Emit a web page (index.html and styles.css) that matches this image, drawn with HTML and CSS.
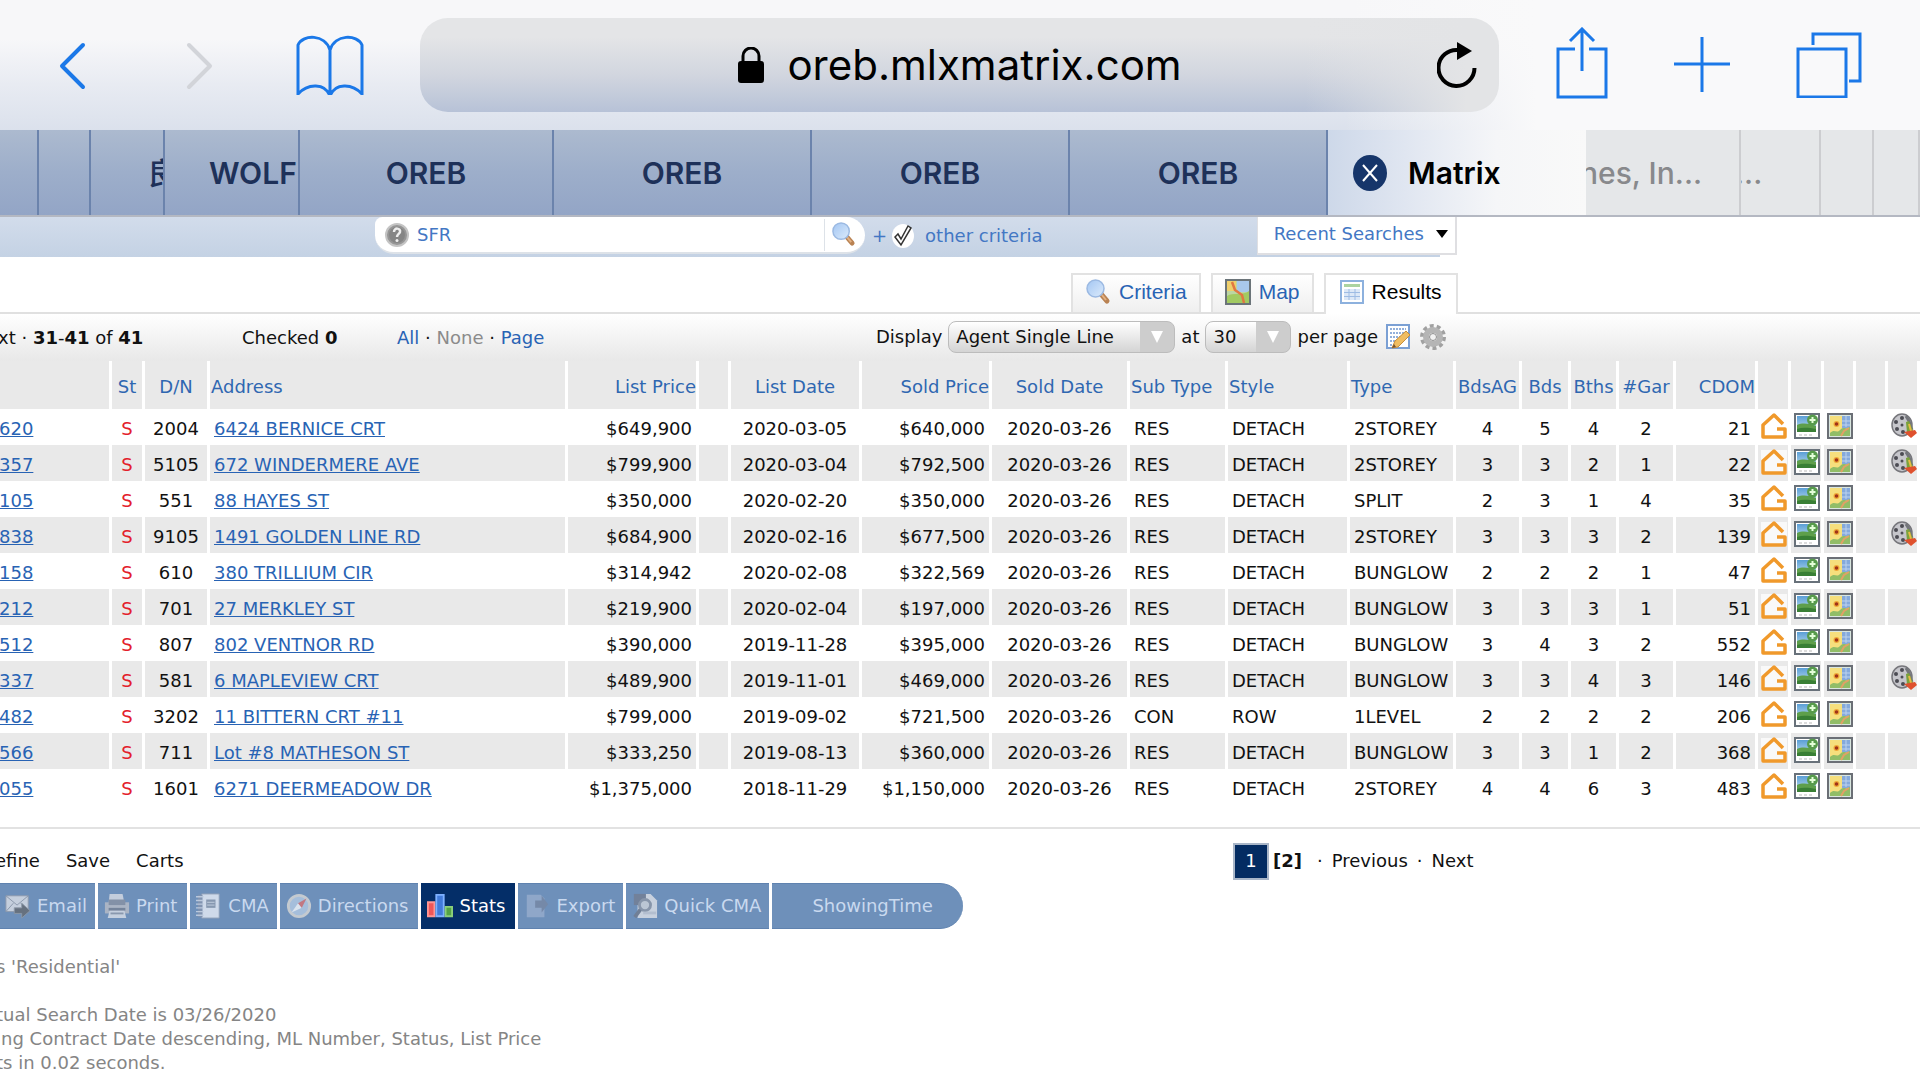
FILE: index.html
```html
<!DOCTYPE html>
<html lang="en">
<head>
<meta charset="utf-8">
<title>Matrix</title>
<link rel="stylesheet" href="styles.css">
</head>
<body>
<svg class="sprite" aria-hidden="true">
  <linearGradient id="sky" x1="0" y1="0" x2="0" y2="1"><stop offset="0" stop-color="#5b9fd6"/><stop offset="1" stop-color="#c4e2f2"/></linearGradient>
  <linearGradient id="lens" x1="0" y1="0" x2="1" y2="1"><stop offset="0" stop-color="#a3c6f3"/><stop offset="1" stop-color="#dcebfb"/></linearGradient>
  <symbol id="house" viewBox="0 0 26 26"><path d="M0 1h26v24H0z" fill="#fff" opacity=".7"/><path d="M22 11 13 2 2 12v12h22v-8h-8" fill="none" stroke="#f0992b" stroke-width="3.500" stroke-linejoin="round"/></symbol>
  <symbol id="photo" viewBox="0 0 26 26"><path d="M1 1h24v24H1z" fill="#fff" stroke="#68717a" stroke-width="2"/><path d="M3 3h19v16H3z" fill="url(#sky)"/><path d="M3 12c5-2 10-2 19 1v6H3z" fill="#5e9f4b"/><path d="M3 16c6-2 12-1 19 0v3H3z" fill="#397f35"/><circle cx="18.500" cy="7" r="5.500" fill="#579b4c"/><path d="M18.500 4v6M15.500 7h6" stroke="#e4ffd9" stroke-width="2"/><path d="M5 22h15" stroke="#b9b9b9" stroke-dasharray="3 2"/></symbol>
  <symbol id="pin-map" viewBox="0 0 26 26"><path d="M1 1h24v24H1z" fill="#d9e6df" stroke="#6b6f76" stroke-width="2"/><path d="M3 3h12v20H3z" fill="#f6df7d"/><path d="M15 3h8v12h-8z" fill="#84a9dc"/><path d="M19 3v11M15 8h8M15 12h8" stroke="#bcd2ee"/><path d="M3 20c5-5 6 1 10-3s5 0 10-3v9H3z" fill="#91bd67"/><path d="m14 23 3-5 5-3" fill="none" stroke="#e2a066" stroke-width="2"/><circle cx="9.500" cy="11" r="3" fill="#efa93a"/><circle cx="9.500" cy="11" r="1.800" fill="#a13218"/></symbol>
  <symbol id="film" viewBox="0 0 26 26"><ellipse cx="11" cy="12" rx="10" ry="11" fill="#c6c6cb" stroke="#77777c" stroke-width="1.500"/><g fill="#4c4c53"><circle cx="11" cy="5" r="2"/><circle cx="5" cy="9" r="2"/><circle cx="6" cy="16" r="2"/><circle cx="12" cy="19" r="2"/><circle cx="11" cy="12" r="1.500"/></g><path d="m15 3 3 5 3 9" fill="none" stroke="#74767b" stroke-width="3"/><path d="m15 9 3-1 4 10-6 2z" fill="#7ba23b"/><path d="m18 11 2 7" stroke="#e8bc45" stroke-width="2"/><path d="m13 19 11-2 2 3-6 5z" fill="#df512e"/></symbol>
  <symbol id="magnifier" viewBox="0 0 26 26"><path d="m16 15 6 7" stroke="#b98252" stroke-width="5" stroke-linecap="round"/><path d="m17 16 4 5" stroke="#e2b183" stroke-width="2"/><ellipse cx="10.500" cy="9.500" rx="8.500" ry="8.500" fill="url(#lens)" stroke="#9bb9e2" stroke-width="1.500"/></symbol>
</svg>

<header class="browser">
  <nav class="controls" aria-label="Browser">
    <button class="glyph" aria-label="Back"><svg width="28" height="50" viewBox="0 0 28 50"><path d="M25 5 4 26l21 21" class="line thick"/></svg></button>
    <button class="glyph" aria-label="Forward"><svg width="28" height="50" viewBox="0 0 28 50"><path d="m3 5 21 21L3 47" class="line thick off"/></svg></button>
    <button class="glyph" aria-label="Bookmarks"><svg width="68" height="60" viewBox="0 0 68 60"><path d="M34 61V15C29-1 7-1 2 10v49c10-11 27-11 32 2 5-13 22-13 32-2V10C61-1 39-1 34 15" class="line"/></svg></button>
    <div class="address">
      <svg width="28" height="36" viewBox="0 0 28 36"><rect x="1" y="14" width="26" height="22" rx="3"/><path d="M6 17V9a8 8 0 0 1 16 0v8" fill="none" stroke="#000" stroke-width="3"/></svg>
      <span>oreb.mlxmatrix.com</span>
      <button class="reload" aria-label="Reload"><svg width="40" height="46" viewBox="0 0 40 46"><path d="M37.500 26A18 18 0 1 1 21 8" fill="none" stroke="#000" stroke-width="4"/><path d="m20 0 15 9-15 9z"/></svg></button>
    </div>
    <button class="glyph" aria-label="Share"><svg width="52" height="76" viewBox="0 2 52 76"><path d="M19 24H2v48h48V24H33M26 46V4M14 16 26 4l12 12" class="line"/></svg></button>
    <button class="glyph" aria-label="New tab"><svg width="56" height="56" viewBox="0 0 56 56"><path d="M28 0v55M0 27h56" class="line"/></svg></button>
    <button class="glyph" aria-label="All tabs"><svg width="66" height="66" viewBox="0 0 66 66"><path d="M2 17h48v48H2zM17 13V2h47v47H53" class="line"/></svg></button>
  </nav>
  <nav class="tabs" aria-label="Open tabs">
    <div></div><div></div><div class="cut cjk">良</div><div class="cut">WOLF</div>
    <div>OREB</div><div>OREB</div><div>OREB</div><div>OREB</div>
    <div class="active"><button class="close" aria-label="Close tab"><svg width="34" height="36" viewBox="0 0 34 36"><ellipse cx="17" cy="18" rx="17" ry="18" fill="#16356a"/><path d="m10 10 14 16M24 10 10 26" stroke="#fff" stroke-width="2"/></svg></button>Matrix</div>
    <div class="idle">nes, In...</div><div class="idle">...</div><div class="idle"></div><div class="idle"></div>
  </nav>
</header>

<main>
  <form class="search">
    <div class="pill">
      <svg width="26" height="26" viewBox="0 0 26 26"><circle cx="13" cy="13" r="11" fill="#969696" stroke="#c4c4c4" stroke-width="2"/><circle cx="13" cy="13" r="8" fill="#858585"/><path d="M10 10c0-5 7-4 6 0-.500 2-3 2-3 5" fill="none" stroke="#eee" stroke-width="2.500"/><circle cx="13" cy="18.500" r="1.500" fill="#eee"/></svg>
      <input type="text" value="SFR" aria-label="Search">
      <button type="button" aria-label="Search"><svg width="25" height="25"><use href="#magnifier"/></svg></button>
    </div>
    <a class="other" href="#"><span>+</span><svg width="22" height="24" viewBox="0 0 22 24"><ellipse cx="11" cy="12" rx="11" ry="12" fill="#fff"/><path d="m3 13 3-3 3 5 7-13 3 2L9 21z" fill="#fff" stroke="#333" stroke-width="1.500"/></svg><span>other criteria</span></a>
    <button class="recent" type="button">Recent Searches<svg width="12" height="8" viewBox="0 0 12 8"><path d="M0 0h12L6 8z"/></svg></button>
  </form>

  <nav class="views">
    <a href="#"><svg width="26" height="26"><use href="#magnifier"/></svg>Criteria</a>
    <a href="#"><svg width="26" height="26" viewBox="0 0 26 26"><path d="M1 1h24v24H1z" fill="#bcd6a3" stroke="#6b7479" stroke-width="2"/><path d="M2 2h9v10H2z" fill="#efcf6c"/><path d="M12 2h12v11H12z" fill="#a9c8ec"/><path d="M2 17c6-4 16 0 22-5v12H2z" fill="#a2ca62"/><path d="m7 3 3 8 7 5 2 8" fill="none" stroke="#e17742" stroke-width="2.500"/></svg>Map</a>
    <a href="#" class="current"><svg width="24" height="24" viewBox="0 0 24 24"><path d="M1 1h22v22H1z" fill="#fff" stroke="#8db1de" stroke-width="2"/><path d="M4 4h16v3H4z" fill="#abd3a0"/><path d="M4 9h16v11H4z" fill="#dce8f7"/><path d="M4 12.500h16M4 16.500h16M9 9v11M15 9v11" stroke="#9ebce4"/></svg>Results</a>
  </nav>

  <div class="toolbar">
    <div class="count">xt · <b>31</b>-<b>41</b> of <b>41</b></div>
    <div class="checked">Checked <b>0</b></div>
    <div class="pick"><a href="#">All</a> · <span class="muted">None</span> · <a href="#">Page</a></div>
    <div class="display">
      <label for="view">Display</label>
      <span class="select wide"><select id="view"><option>Agent Single Line</option></select><svg width="12" height="12" viewBox="0 0 12 12"><path d="M0 0h12L6 12z" fill="#fff"/></svg></span>
      <label for="per">at</label>
      <span class="select"><select id="per"><option>30</option></select><svg width="12" height="12" viewBox="0 0 12 12"><path d="M0 0h12L6 12z" fill="#fff"/></svg></span>
      <label for="per">per page</label>
      <button class="tool" aria-label="Edit display"><svg width="25" height="26" viewBox="0 0 25 26"><path d="M1 1h22v23H1z" fill="#fff" stroke="#7ba0d4" stroke-width="2"/><path d="M4 5h16M4 9h16M4 13h16M4 17h14M4 21h7" stroke="#6f96cf" stroke-width="1.500" stroke-dasharray="2 1"/><path d="m6 24 3-7L20 7l4 4-12 12z" fill="#efbd62" stroke="#c78e3a"/><path d="m6 24 2-4 2 3z" fill="#765234"/></svg></button>
      <button class="tool" aria-label="Settings"><svg width="28" height="28" viewBox="0 0 28 28"><circle cx="14" cy="14" r="11" fill="none" stroke="#a1a1a1" stroke-width="4" stroke-dasharray="3.900 3"/><circle cx="14" cy="14" r="7" fill="none" stroke="#b5b5b5" stroke-width="6"/><circle cx="14" cy="14" r="3.500" fill="#f1f1f1" stroke="#8f8f8f"/></svg></button>
    </div>
  </div>

  <table class="listing">
    <colgroup><col class="w112"><col class="w33"><col class="w65"><col class="w358"><col class="w131"><col class="w32"><col class="w131"><col class="w130"><col class="w138"><col class="w98"><col class="w122"><col class="w106"><col class="w66"><col class="w49"><col class="w48"><col class="w57"><col class="w82"><col class="w33"><col class="w33"><col class="w32"><col class="w32"><col class="w32"></colgroup>
    <thead><tr><th></th><th class="c">St</th><th class="c">D/N</th><th>Address</th><th class="r">List Price</th><th></th><th class="c">List Date</th><th class="r">Sold Price</th><th class="c">Sold Date</th><th>Sub Type</th><th>Style</th><th>Type</th><th class="c">BdsAG</th><th class="c">Bds</th><th class="c">Bths</th><th class="c">#Gar</th><th class="r">CDOM</th><th></th><th></th><th></th><th></th><th></th></tr></thead>
    <tbody>
    <tr><td class="id"><a href="#">620</a></td><td class="c st">S</td><td class="c">2004</td><td><a href="#">6424 BERNICE CRT</a></td><td class="r">$649,900</td><td></td><td class="c">2020-03-05</td><td class="r">$640,000</td><td class="c">2020-03-26</td><td>RES</td><td>DETACH</td><td>2STOREY</td><td class="c">4</td><td class="c">5</td><td class="c">4</td><td class="c">2</td><td class="r">21</td><td class="i"><svg><use href="#house"/></svg></td><td class="i"><svg><use href="#photo"/></svg></td><td class="i"><svg><use href="#pin-map"/></svg></td><td></td><td class="i"><svg><use href="#film"/></svg></td></tr>
    <tr><td class="id"><a href="#">357</a></td><td class="c st">S</td><td class="c">5105</td><td><a href="#">672 WINDERMERE AVE</a></td><td class="r">$799,900</td><td></td><td class="c">2020-03-04</td><td class="r">$792,500</td><td class="c">2020-03-26</td><td>RES</td><td>DETACH</td><td>2STOREY</td><td class="c">3</td><td class="c">3</td><td class="c">2</td><td class="c">1</td><td class="r">22</td><td class="i"><svg><use href="#house"/></svg></td><td class="i"><svg><use href="#photo"/></svg></td><td class="i"><svg><use href="#pin-map"/></svg></td><td></td><td class="i"><svg><use href="#film"/></svg></td></tr>
    <tr><td class="id"><a href="#">105</a></td><td class="c st">S</td><td class="c">551</td><td><a href="#">88 HAYES ST</a></td><td class="r">$350,000</td><td></td><td class="c">2020-02-20</td><td class="r">$350,000</td><td class="c">2020-03-26</td><td>RES</td><td>DETACH</td><td>SPLIT</td><td class="c">2</td><td class="c">3</td><td class="c">1</td><td class="c">4</td><td class="r">35</td><td class="i"><svg><use href="#house"/></svg></td><td class="i"><svg><use href="#photo"/></svg></td><td class="i"><svg><use href="#pin-map"/></svg></td><td></td><td></td></tr>
    <tr><td class="id"><a href="#">838</a></td><td class="c st">S</td><td class="c">9105</td><td><a href="#">1491 GOLDEN LINE RD</a></td><td class="r">$684,900</td><td></td><td class="c">2020-02-16</td><td class="r">$677,500</td><td class="c">2020-03-26</td><td>RES</td><td>DETACH</td><td>2STOREY</td><td class="c">3</td><td class="c">3</td><td class="c">3</td><td class="c">2</td><td class="r">139</td><td class="i"><svg><use href="#house"/></svg></td><td class="i"><svg><use href="#photo"/></svg></td><td class="i"><svg><use href="#pin-map"/></svg></td><td></td><td class="i"><svg><use href="#film"/></svg></td></tr>
    <tr><td class="id"><a href="#">158</a></td><td class="c st">S</td><td class="c">610</td><td><a href="#">380 TRILLIUM CIR</a></td><td class="r">$314,942</td><td></td><td class="c">2020-02-08</td><td class="r">$322,569</td><td class="c">2020-03-26</td><td>RES</td><td>DETACH</td><td>BUNGLOW</td><td class="c">2</td><td class="c">2</td><td class="c">2</td><td class="c">1</td><td class="r">47</td><td class="i"><svg><use href="#house"/></svg></td><td class="i"><svg><use href="#photo"/></svg></td><td class="i"><svg><use href="#pin-map"/></svg></td><td></td><td></td></tr>
    <tr><td class="id"><a href="#">212</a></td><td class="c st">S</td><td class="c">701</td><td><a href="#">27 MERKLEY ST</a></td><td class="r">$219,900</td><td></td><td class="c">2020-02-04</td><td class="r">$197,000</td><td class="c">2020-03-26</td><td>RES</td><td>DETACH</td><td>BUNGLOW</td><td class="c">3</td><td class="c">3</td><td class="c">3</td><td class="c">1</td><td class="r">51</td><td class="i"><svg><use href="#house"/></svg></td><td class="i"><svg><use href="#photo"/></svg></td><td class="i"><svg><use href="#pin-map"/></svg></td><td></td><td></td></tr>
    <tr><td class="id"><a href="#">512</a></td><td class="c st">S</td><td class="c">807</td><td><a href="#">802 VENTNOR RD</a></td><td class="r">$390,000</td><td></td><td class="c">2019-11-28</td><td class="r">$395,000</td><td class="c">2020-03-26</td><td>RES</td><td>DETACH</td><td>BUNGLOW</td><td class="c">3</td><td class="c">4</td><td class="c">3</td><td class="c">2</td><td class="r">552</td><td class="i"><svg><use href="#house"/></svg></td><td class="i"><svg><use href="#photo"/></svg></td><td class="i"><svg><use href="#pin-map"/></svg></td><td></td><td></td></tr>
    <tr><td class="id"><a href="#">337</a></td><td class="c st">S</td><td class="c">581</td><td><a href="#">6 MAPLEVIEW CRT</a></td><td class="r">$489,900</td><td></td><td class="c">2019-11-01</td><td class="r">$469,000</td><td class="c">2020-03-26</td><td>RES</td><td>DETACH</td><td>BUNGLOW</td><td class="c">3</td><td class="c">3</td><td class="c">4</td><td class="c">3</td><td class="r">146</td><td class="i"><svg><use href="#house"/></svg></td><td class="i"><svg><use href="#photo"/></svg></td><td class="i"><svg><use href="#pin-map"/></svg></td><td></td><td class="i"><svg><use href="#film"/></svg></td></tr>
    <tr><td class="id"><a href="#">482</a></td><td class="c st">S</td><td class="c">3202</td><td><a href="#">11 BITTERN CRT #11</a></td><td class="r">$799,000</td><td></td><td class="c">2019-09-02</td><td class="r">$721,500</td><td class="c">2020-03-26</td><td>CON</td><td>ROW</td><td>1LEVEL</td><td class="c">2</td><td class="c">2</td><td class="c">2</td><td class="c">2</td><td class="r">206</td><td class="i"><svg><use href="#house"/></svg></td><td class="i"><svg><use href="#photo"/></svg></td><td class="i"><svg><use href="#pin-map"/></svg></td><td></td><td></td></tr>
    <tr><td class="id"><a href="#">566</a></td><td class="c st">S</td><td class="c">711</td><td><a href="#">Lot #8 MATHESON ST</a></td><td class="r">$333,250</td><td></td><td class="c">2019-08-13</td><td class="r">$360,000</td><td class="c">2020-03-26</td><td>RES</td><td>DETACH</td><td>BUNGLOW</td><td class="c">3</td><td class="c">3</td><td class="c">1</td><td class="c">2</td><td class="r">368</td><td class="i"><svg><use href="#house"/></svg></td><td class="i"><svg><use href="#photo"/></svg></td><td class="i"><svg><use href="#pin-map"/></svg></td><td></td><td></td></tr>
    <tr><td class="id"><a href="#">055</a></td><td class="c st">S</td><td class="c">1601</td><td><a href="#">6271 DEERMEADOW DR</a></td><td class="r">$1,375,000</td><td></td><td class="c">2018-11-29</td><td class="r">$1,150,000</td><td class="c">2020-03-26</td><td>RES</td><td>DETACH</td><td>2STOREY</td><td class="c">4</td><td class="c">4</td><td class="c">6</td><td class="c">3</td><td class="r">483</td><td class="i"><svg><use href="#house"/></svg></td><td class="i"><svg><use href="#photo"/></svg></td><td class="i"><svg><use href="#pin-map"/></svg></td><td></td><td></td></tr>
    </tbody>
  </table>

  <div class="below">
    <nav class="manage"><a href="#">efine</a><a href="#">Save</a><a href="#">Carts</a></nav>
    <nav class="pager"><a class="page" href="#">1</a><b>[2]</b><span>·</span><a href="#">Previous</a><span>·</span><a href="#">Next</a></nav>
  </div>

  <div class="actions">
    <button class="email"><svg width="26" height="26" viewBox="0 0 28 28"><path d="M1 3h24v17H1z" fill="#c5cfdd" stroke="#8f9bad"/><path d="m1 3 12 10L25 3M1 20l8-9M25 20l-8-9" fill="none" stroke="#8996aa"/><path d="M10 16h8v-5l9 8-9 8v-5h-8z" fill="#66717f" stroke="#8c98a8"/></svg>Email</button>
    <button class="roomy"><svg width="26" height="26" viewBox="0 0 28 28"><path d="M6 1h14l2 10H5z" fill="#c3cddc"/><path d="M1 10h26v12H1z" fill="#aab4c4"/><path d="M5 7h18v6H5z" fill="#8391a7"/><path d="M5 16h18v3H5z" fill="#75849b"/><path d="M6 19h16l2 8H4z" fill="#c5d0df"/><path d="M7 22h14" stroke="#8998ae" stroke-width="2"/></svg>Print</button>
    <button><svg width="26" height="26" viewBox="0 0 28 28"><path d="M6 1h19v26H6z" fill="#cfdaea" stroke="#8d9eb7"/><path d="M2 2h5v24H2z" fill="#8093b0"/><path d="M0 4h8M0 8h8M0 12h8M0 16h8M0 20h8M0 24h8" stroke="#bac8dc" stroke-width="1.500"/><path d="M11 7h10v9H11z" fill="#8798b0"/><path d="M12 10h8M12 13h8" stroke="#c5d1e1"/></svg>CMA</button>
    <button class="roomy"><svg width="26" height="26" viewBox="0 0 28 28"><circle cx="14" cy="14" r="11.500" fill="#a5bedb" stroke="#c4cad0" stroke-width="3"/><path d="m6 21 7-10 4 5z" fill="#dae3ee"/><path d="m22 6-9 5 4 5z" fill="#c27882"/></svg>Directions</button>
    <button class="on roomy"><svg width="26" height="26" viewBox="0 0 28 28"><path d="M1 10h7v15H1z" fill="#ef5658" stroke="#ff9693" stroke-width="2"/><path d="M10 2h8v23h-8z" fill="#417bda" stroke="#7eb1ff" stroke-width="2"/><path d="M20 15h7v10h-7z" fill="#54a346" stroke="#8bd07a" stroke-width="2"/></svg>Stats</button>
    <button><svg width="26" height="26" viewBox="0 0 28 28"><path d="M3 2h15l4 4v20H3z" fill="#8fa7c9"/><path d="M12 8h7V3l7 9-7 9v-5h-7z" fill="#7589a8"/></svg>Export</button>
    <button><svg width="26" height="26" viewBox="0 0 28 28"><path d="M6 1h14l7 7v19H6z" fill="#c8d1de"/><path d="M2 1h13v12H2z" fill="#72819a"/><circle cx="14" cy="13" r="6" fill="#bbc6d4" stroke="#8795aa" stroke-width="3"/><path d="m9 18-6 8" stroke="#707f96" stroke-width="4"/><path d="M12 20h14v3H12z" fill="#b3becf"/></svg>Quick CMA</button>
    <button class="last">ShowingTime</button>
  </div>

  <footer>
    <p>s 'Residential'</p>
    <p>tual Search Date is 03/26/2020<br>ing Contract Date descending, ML Number, Status, List Price<br>ts in 0.02 seconds.</p>
  </footer>
</main>
</body>
</html>
```

FILE: styles.css
```css
* { box-sizing: border-box; }
body { margin: 0; overflow-x: hidden; background: #fff; color: #111; font: 18px/24px "DejaVu Sans", sans-serif; }
button, input, select { font: inherit; color: inherit; border: 0; margin: 0; padding: 0; background: none; }
a { color: inherit; text-decoration: none; }
svg { flex: none; display: block; }
.sprite { position: absolute; width: 0; height: 0; }

/* browser chrome */
.browser { font-family: Inter, "Noto Sans CJK SC", sans-serif; }
.controls {
  display: flex; align-items: center; height: 130px; padding: 0 58px;
  background: linear-gradient(90deg, transparent 70%, #f9f9fa 80%), linear-gradient(#f7f7f9 30%, #e8ebf2 65%, #dbe1ec);
}
.line { fill: none; stroke: #1b78e8; stroke-width: 3; }
.thick { stroke-width: 4; stroke-linecap: round; stroke-linejoin: round; }
.off { stroke: #d2d4d9; }
.glyph + .glyph { margin-left: 100px; }
.glyph:nth-child(3) { margin-left: 82px; }
.address {
  flex: 1; display: flex; align-items: center; justify-content: center; gap: 22px; position: relative;
  height: 94px; margin: 0 57px 0 56px; border-radius: 28px; font-size: 42px; line-height: 50px; color: #000;
  background: linear-gradient(90deg, transparent 82%, #e3e4e6 97%), linear-gradient(#e4e5e7 20%, #d2d6df 60%, #b7c2d7);
}
.reload { position: absolute; right: 22px; top: 24px; }
.glyph:nth-child(6) { margin-left: 66px; }
.glyph:nth-child(7) { margin-left: 66px; }
.tabs {
  display: grid; height: 87px; border-bottom: 2px solid #b4b8c2;
  grid-template-columns: 39fr 52fr 74fr 135fr 254fr 258fr 258fr 258fr 258fr 155fr 80fr 53fr 46fr;
  font-weight: 600; font-size: 30px; line-height: 36px; color: #1e3159;
  background: linear-gradient(#acbacf, #9daeca 50%, #93a5c6);
}
.tabs div { display: flex; align-items: center; justify-content: center; overflow: hidden; white-space: nowrap; border-right: 2px solid #6b83ac; }
.tabs .cut { justify-content: flex-start; padding-left: 44px; }
.tabs .cjk { padding-left: 56px; font-weight: 500; }
.tabs .active { justify-content: flex-start; gap: 21px; padding-left: 25px; border: 0; color: #000; background: linear-gradient(90deg, #cdd8e9, #e0e6f1 30%, #f5f6f8 65%, #f9f9f9); }
.tabs .idle { justify-content: flex-start; text-indent: -6px; font-weight: 500; color: #88898c; background: #e5e7e9; border-color: #cccdd0; }

/* search row */
.search { display: flex; align-items: flex-start; height: 40px; padding-left: 375px; color: #4377c4; background: linear-gradient(#d2dceb, #c4d2e4) no-repeat; background-size: 75% 100%; }
.pill { display: flex; align-items: center; width: 490px; height: 37px; padding-left: 9px; background: #fff; border-radius: 8px 20px 20px 20px; border-bottom: 2px solid #dde2e8; }
.pill input { flex: 1; min-width: 0; height: 32px; padding-left: 7px; border-right: 1px solid #dde2e8; }
.pill button { padding: 0 9px 0 6px; }
.other { display: flex; align-items: center; height: 37px; padding-left: 7px; gap: 5px; }
.other span:last-child { padding-left: 6px; }
.recent { display: flex; align-items: center; justify-content: space-between; width: 200px; height: 38px; margin-left: 214px; padding: 0 7px 2px 16px; background: #fff; border: solid #dfdfe2; border-width: 0 2px 2px 1px; }

/* view tabs */
.views { display: flex; align-items: flex-end; gap: 10px; height: 57px; padding-left: 1071px; border-bottom: 2px solid #e0e0e0; font: 21px/26px "Liberation Sans", sans-serif; color: #2863b4; }
.views a { display: flex; align-items: center; gap: 8px; height: 39px; padding: 0 12px 4px; border: 2px solid #e2e2e2; border-bottom: 0; background: linear-gradient(#fff, #efefef); }
.views .current { color: #000; height: 41px; margin-bottom: -2px; padding: 0 14px 6px; background: #fff; }

/* toolbar */
.toolbar { display: flex; align-items: center; height: 47px; background: linear-gradient(#fff, #e8e8e8); color: #111; white-space: nowrap; }
.toolbar a { color: #2863b4; }
.count { width: 242px; text-indent: -2px; }
.checked { width: 155px; }
.pick { width: 479px; }
.muted { color: #8b8b8b; }
.display { display: flex; align-items: center; gap: 6px; padding-bottom: 2px; }
.select { position: relative; width: 86px; }
.wide { width: 227px; }
.select select { appearance: none; width: 100%; height: 32px; padding-left: 7px; border: 1px solid #bcbcbc; border-radius: 8px; background: linear-gradient(90deg, transparent calc(100% - 34px), #cdcdcd 0), linear-gradient(#fff, #d4d4d4); }
.select svg { position: absolute; right: 12px; top: 10px; pointer-events: none; }
.tool { margin-left: 2px; }

/* listing */
.listing { width: 100%; table-layout: fixed; border-collapse: separate; border-spacing: 0; margin-bottom: 22px; white-space: nowrap; }
.w112 { width: 112px; } .w33 { width: 33px; } .w65 { width: 65px; } .w358 { width: 358px; } .w131 { width: 131px; } .w32 { width: 32px; }
.w130 { width: 130px; } .w138 { width: 138px; } .w98 { width: 98px; } .w122 { width: 122px; } .w106 { width: 106px; } .w66 { width: 66px; }
.w49 { width: 49px; } .w48 { width: 48px; } .w57 { width: 57px; } .w82 { width: 82px; }
.listing th { height: 48px; padding: 4px 0 0 1px; font-weight: 400; text-align: left; color: #2f67b1; background: #e9e9e9; border-right: 3px solid #fff; }
.listing td { height: 36px; padding: 4px 4px 0; border-right: 3px solid #fff; }
.listing tbody tr:nth-child(even) td { background: #e9e9e9; }
.listing .c { text-align: center; padding-left: 0; padding-right: 0; }
.listing .r { text-align: right; }
.listing .id { padding-left: 0; text-indent: -1px; }
.listing .i { padding: 0 0 2px 3px; }
.listing .i svg { width: 26px; height: 26px; }
.listing td a { color: #2863b4; text-decoration: underline; }
.listing .st { color: #e3202b; }

/* under the listing */
.below { display: flex; align-items: center; height: 56px; border-top: 2px solid #e2e2e2; padding-top: 10px; }
.manage { display: flex; gap: 26px; width: 1238px; margin-left: -5px; }
.pager { display: flex; align-items: center; gap: 9px; }
.page { display: grid; place-items: center; width: 36px; height: 37px; margin-right: -5px; background: #042c62; color: #fff; border: 2px solid #a9b6c8; }
.pager b { margin-right: 6px; }
.actions { display: flex; gap: 3px; color: #c9d9ef; }
.actions button { display: flex; align-items: center; gap: 6px; height: 46px; padding: 0 8px 0 6px; background: #6e90ba; border: 1px solid #5f82af; border-width: 1px 0; }
.actions .email { padding-left: 5px; }
.actions .roomy { padding-right: 10px; }
.actions .on { color: #fff; background: #042e68; border-color: #042e68; }
.actions .last { padding: 0 30px 0 40px; border-radius: 0 23px 23px 0; }
footer { margin-left: -4px; padding-top: 26px; color: #858585; }
footer p { margin: 0 0 24px; }
```
